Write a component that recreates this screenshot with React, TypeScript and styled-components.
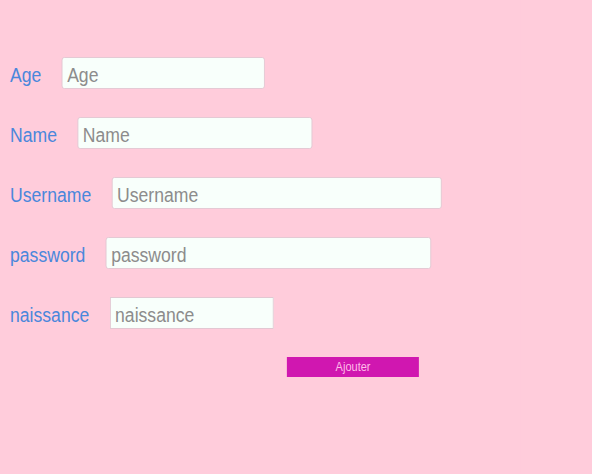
import React from "react";
import styled, { createGlobalStyle } from "styled-components";

const Global = createGlobalStyle`
  html, body { margin: 0; padding: 0; background: #ffccdb; overflow: hidden; }
  body { font-family: "Liberation Sans", Arial, sans-serif; }
`;

/* The original page is rendered with a narrow horizontal scale (≈0.88). */
const Page = styled.div`
  height: 474px;
  background: #ffccdb;
  box-sizing: border-box;
  padding: 57px 0 0 11.4px;
  transform: scaleX(0.88);
  transform-origin: 0 0;
`;

const Form = styled.form`
  display: flex;
  flex-direction: column;
  gap: 28px;
`;

const Row = styled.div`
  display: flex;
  align-items: center;
  gap: 23.3px;
  height: 32px;
`;

const Label = styled.label`
  font-size: 20px;
  color: #4a87db;
  line-height: 32px;
  padding-top: 4px;
`;

const Input = styled.input<{ $w: number; $square?: boolean }>`
  width: ${(p) => p.$w}px;
  height: 32px;
  box-sizing: border-box;
  background: #f8fffb;
  border: 1px solid #e2c8d2;
  border-radius: ${(p) => (p.$square ? "0" : "3px")};
  padding: 4px 5px 0;
  font-family: "Liberation Sans", Arial, sans-serif;
  font-size: 20px;
  color: #333;
  outline: none;
  &::placeholder { color: #8c8c8c; }
`;

const Button = styled.button`
  margin-left: 314.8px;
  width: 150px;
  height: 20px;
  background: #d017b0;
  color: #ffbde9;
  border: none;
  padding: 0;
  font-family: "Liberation Sans", Arial, sans-serif;
  font-size: 12.5px;
  cursor: pointer;
`;

const fields = [
  { name: "Age", w: 230.7 },
  { name: "Name", w: 267 },
  { name: "Username", w: 375 },
  { name: "password", w: 369.3 },
  { name: "naissance", w: 186.4, square: true },
];

export default function App() {
  return (
    <Page>
      <Global />
      <Form onSubmit={(e) => e.preventDefault()}>
        {fields.map((f) => (
          <Row key={f.name}>
            <Label>{f.name}</Label>
            <Input $w={f.w} $square={f.square} placeholder={f.name} />
          </Row>
        ))}
        <div>
          <Button type="submit">Ajouter</Button>
        </div>
      </Form>
    </Page>
  );
}
